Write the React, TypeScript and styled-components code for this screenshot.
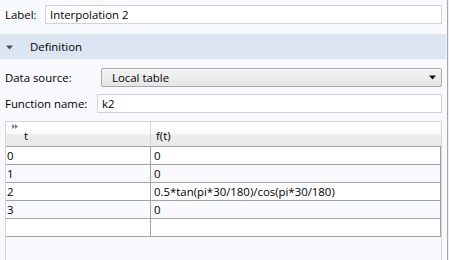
import React from 'react';
import styled, { createGlobalStyle } from 'styled-components';

const GlobalStyle = createGlobalStyle`
  html, body {
    margin: 0;
    padding: 0;
    background: #f8f9fd;
  }
  body {
    font-family: 'Open Sans', 'Noto Sans', sans-serif;
    font-size: 11.4px;
    color: #000;
  }
`;

const rows = [
  { t: '0', f: '0' },
  { t: '1', f: '0' },
  { t: '2', f: '0.5*tan(pi*30/180)/cos(pi*30/180)' },
  { t: '3', f: '0' },
  { t: '', f: '' },
];

function App() {
  return (
    <>
      <GlobalStyle />
      <Page>
        <Content>
          <FieldRow $labelWidth={45}>
            <FieldLabel>Label:</FieldLabel>
            <TextBox readOnly value="Interpolation 2" />
          </FieldRow>

          <SectionHeader>
            <svg width="7" height="5" viewBox="0 0 7 5">
              <path d="M0 0.5 L7 0.5 L3.5 4.5 Z" fill="#4d4d4d" />
            </svg>
            <span>Definition</span>
          </SectionHeader>

          <Section>
            <FieldRow $labelWidth={99}>
              <FieldLabel>Data source:</FieldLabel>
              <Dropdown>
                <span>Local table</span>
                <svg width="7" height="5" viewBox="0 0 7 5">
                  <path d="M0 0.5 L7 0.5 L3.5 4.5 Z" fill="#111" />
                </svg>
              </Dropdown>
            </FieldRow>
            <FieldRow $labelWidth={97}>
              <FieldLabel>Function name:</FieldLabel>
              <TextBox readOnly value="k2" />
            </FieldRow>

            <TableFrame>
              <HeaderRow>
                <HeaderCell>
                  <ExpandIcon width="6" height="5" viewBox="0 0 6 5">
                    <path d="M0 0 L3 2.5 L0 5 Z M3 0 L6 2.5 L3 5 Z" fill="#7a7f95" />
                  </ExpandIcon>
                  <span>t</span>
                </HeaderCell>
                <HeaderCell>
                  <span>f(t)</span>
                </HeaderCell>
              </HeaderRow>
              {rows.map((row, index) => (
                <DataRow key={index} $odd={index % 2 === 1}>
                  <Cell>{row.t}</Cell>
                  <Cell $last>{row.f}</Cell>
                </DataRow>
              ))}
            </TableFrame>
          </Section>
        </Content>
        <ScrollEdge />
      </Page>
    </>
  );
}

const Page = styled.div`
  display: flex;
  width: 449px;
  height: 260px;
  overflow: hidden;
  background: #f8f9fd;
`;

const Content = styled.div`
  flex: 1;
  display: flex;
  flex-direction: column;
  padding-top: 5px;
`;

const ScrollEdge = styled.div`
  width: 3px;
  background: linear-gradient(
    to right,
    #f8f9fd 0 1px,
    #a7a7a7 1px 2px,
    #eef0f4 2px 3px
  );
`;

const Section = styled.div`
  display: flex;
  flex-direction: column;
  gap: 7px;
  padding-top: 9px;
  flex: 1;
`;

const FieldRow = styled.div<{ $labelWidth: number }>`
  display: grid;
  grid-template-columns: ${(p) => p.$labelWidth - 5}px 1fr;
  align-items: center;
  padding: 0 4px 0 5px;
  height: 19px;
`;

const FieldLabel = styled.span`
  white-space: nowrap;
  line-height: 19px;
`;

const TextBox = styled.input`
  box-sizing: border-box;
  height: 19px;
  width: 100%;
  margin: 0;
  padding: 0 4px;
  border: 1px solid #d2d3d6;
  background: #fff;
  font: inherit;
  color: #000;
  outline: none;
`;

const SectionHeader = styled.div`
  display: flex;
  align-items: center;
  height: 25px;
  margin-top: 10px;
  background: #dce6f2;
  padding-left: 6px;
  gap: 17px;

  svg {
    margin-top: 1px;
  }
`;

const Dropdown = styled.div`
  box-sizing: border-box;
  height: 19px;
  margin-left: 2px;
  display: flex;
  align-items: center;
  justify-content: space-between;
  padding: 0 5px 0 10px;
  border: 1px solid #a9a9a9;
  border-radius: 2px;
  background: linear-gradient(to bottom, #f3f3f3, #e5e5e5);
  box-shadow: inset 0 1px 0 #fbfbfb;
`;

const TableFrame = styled.div`
  margin: 1px 4px 0 5px;
  flex: 1;
  border: 1px solid #d4d5d8;
  border-bottom: none;
`;

const HeaderRow = styled.div`
  display: grid;
  grid-template-columns: 145px 1fr;
  height: 24px;
  border-bottom: 1px solid #a3a3a3;
  background: linear-gradient(to bottom, #ffffff 0%, #fbfbfb 45%, #ececec 55%, #e9e9e9 100%);
`;

const HeaderCell = styled.div`
  position: relative;
  display: flex;
  align-items: flex-end;
  padding: 0 0 3px 5px;
  border-right: 1px solid #d6d6d6;

  &:first-child {
    padding-left: 18px;
  }
  &:last-child {
    border-right: none;
  }
`;

const ExpandIcon = styled.svg`
  position: absolute;
  left: 6px;
  top: 2px;
`;

const DataRow = styled.div<{ $odd: boolean }>`
  display: grid;
  grid-template-columns: 145px 1fr;
  height: 17px;
  border-bottom: 1px solid #a3a3a3;
  border-right: 1px solid #a3a3a3;
  background: ${(p) => (p.$odd ? '#f8f9fd' : '#ffffff')};
`;

const Cell = styled.div<{ $last?: boolean }>`
  display: flex;
  align-items: center;
  padding-left: ${(p) => (p.$last ? '3px' : '1px')};
  border-right: ${(p) => (p.$last ? 'none' : '1px solid #a3a3a3')};
  white-space: nowrap;
  overflow: hidden;
`;

export default App;
